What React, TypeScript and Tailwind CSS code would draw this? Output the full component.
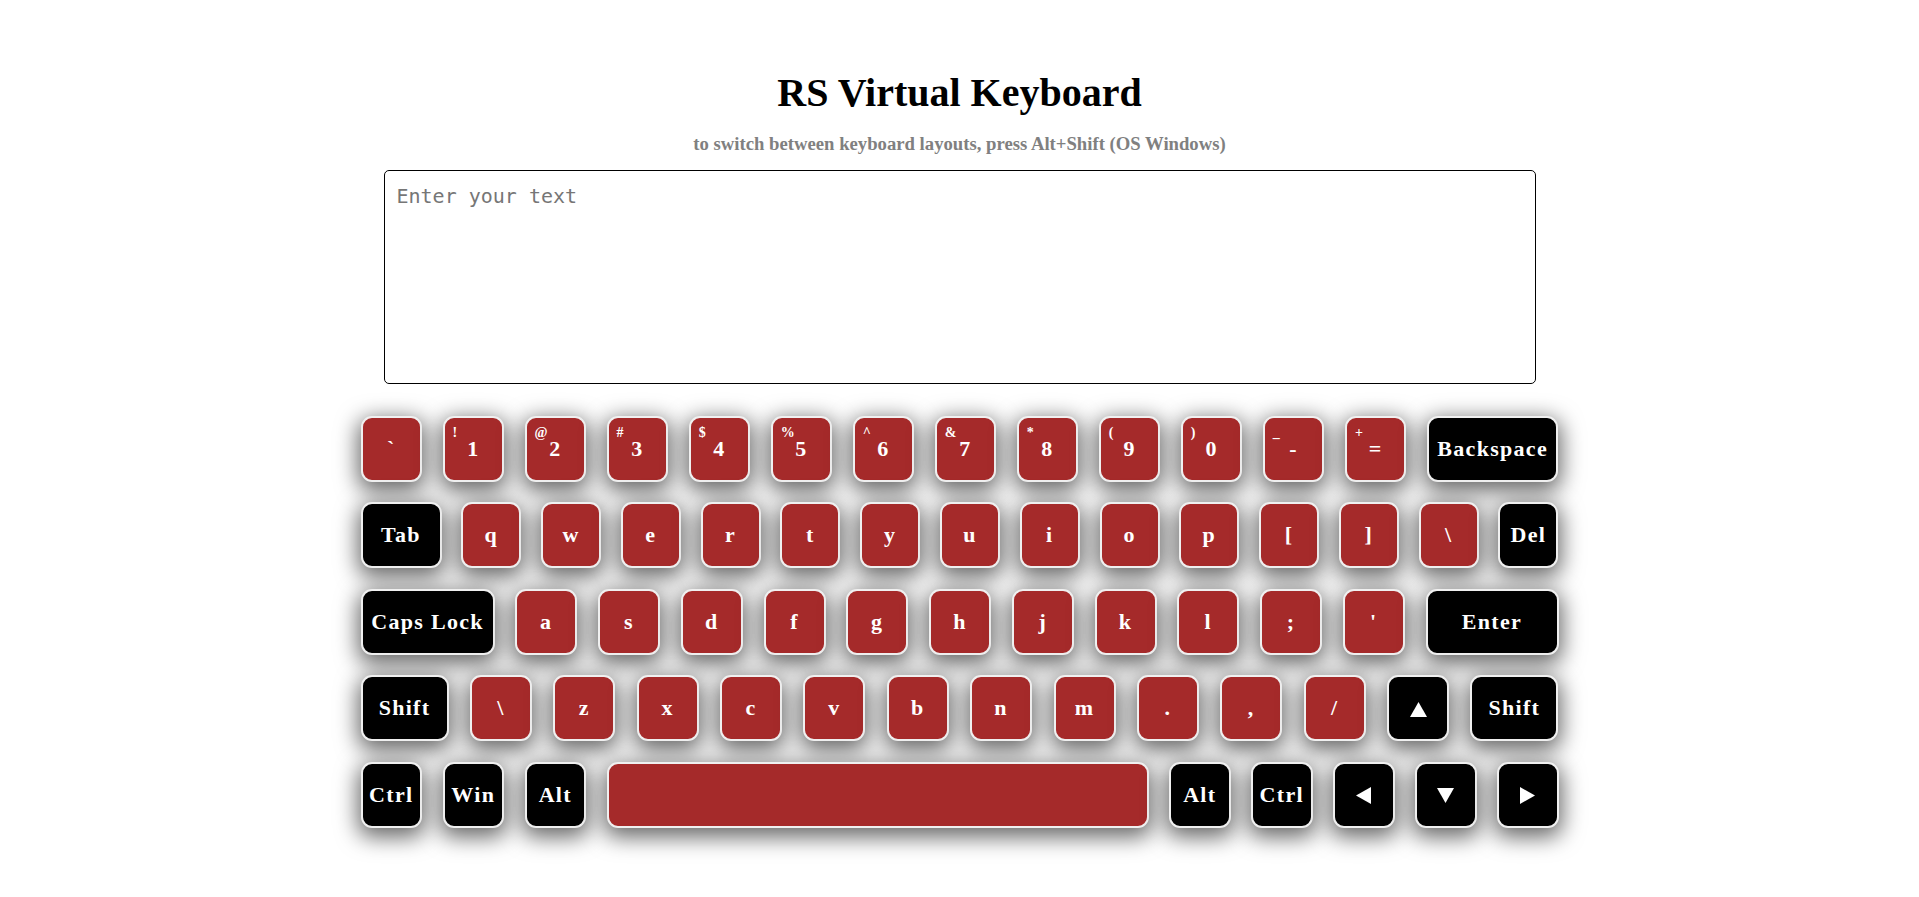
import React from "react";

type K = { l: string; s?: string; w: string; d?: boolean };

const N = "w-[61.5px]";
const Q = "w-[60px]";
const A = "w-[62px]";

const rows: K[][] = [
  [
    { l: "`", w: N },
    { l: "1", s: "!", w: N },
    { l: "2", s: "@", w: N },
    { l: "3", s: "#", w: N },
    { l: "4", s: "$", w: N },
    { l: "5", s: "%", w: N },
    { l: "6", s: "^", w: N },
    { l: "7", s: "&", w: N },
    { l: "8", s: "*", w: N },
    { l: "9", s: "(", w: N },
    { l: "0", s: ")", w: N },
    { l: "-", s: "_", w: N },
    { l: "=", s: "+", w: N },
    { l: "Backspace", w: "w-[131.5px]", d: true },
  ],
  [
    { l: "Tab", w: "w-[81px]", d: true },
    { l: "q", w: Q },
    { l: "w", w: Q },
    { l: "e", w: Q },
    { l: "r", w: Q },
    { l: "t", w: Q },
    { l: "y", w: Q },
    { l: "u", w: Q },
    { l: "i", w: Q },
    { l: "o", w: Q },
    { l: "p", w: Q },
    { l: "[", w: Q },
    { l: "]", w: Q },
    { l: "\\", w: Q },
    { l: "Del", w: Q, d: true },
  ],
  [
    { l: "Caps Lock", w: "w-[134px]", d: true },
    { l: "a", w: A },
    { l: "s", w: A },
    { l: "d", w: A },
    { l: "f", w: A },
    { l: "g", w: A },
    { l: "h", w: A },
    { l: "j", w: A },
    { l: "k", w: A },
    { l: "l", w: A },
    { l: ";", w: A },
    { l: "'", w: A },
    { l: "Enter", w: "w-[133px]", d: true },
  ],
  [
    { l: "Shift", w: "w-[88px]", d: true },
    { l: "\\", w: A },
    { l: "z", w: A },
    { l: "x", w: A },
    { l: "c", w: A },
    { l: "v", w: A },
    { l: "b", w: A },
    { l: "n", w: A },
    { l: "m", w: A },
    { l: ".", w: A },
    { l: ",", w: A },
    { l: "/", w: A },
    { l: "up", w: A, d: true },
    { l: "Shift", w: "w-[88px]", d: true },
  ],
  [
    { l: "Ctrl", w: N, d: true },
    { l: "Win", w: N, d: true },
    { l: "Alt", w: N, d: true },
    { l: "", w: "w-[542px]" },
    { l: "Alt", w: N, d: true },
    { l: "Ctrl", w: N, d: true },
    { l: "left", w: N, d: true },
    { l: "down", w: N, d: true },
    { l: "right", w: N, d: true },
  ],
];

const tri: Record<string, string> = {
  up: "M8.5 0 L17 15 L0 15 Z",
  down: "M0 0 L17 0 L8.5 15 Z",
  left: "M15 0 L15 17 L0 8.5 Z",
  right: "M0 0 L15 8.5 L0 17 Z",
};

function Key({ k }: { k: K }) {
  const t = tri[k.l];
  return (
    <div
      className={`relative flex items-center justify-center h-[66px] rounded-[11px] border-2 border-[#f0f0f0] shadow-[0_6px_22px_3px_rgba(0,0,0,0.6)] text-white font-bold ${k.w} ${
        k.d ? "bg-black" : "bg-[#a52a2a]"
      }`}
    >
      {k.s && (
        <span className="absolute left-[8px] top-[7px] text-[14px] leading-[16px]">
          {k.s}
        </span>
      )}
      {t ? (
        <svg
          width={k.l === "up" || k.l === "down" ? 17 : 15}
          height={k.l === "up" || k.l === "down" ? 15 : 17}
          viewBox={k.l === "up" || k.l === "down" ? "0 0 17 15" : "0 0 15 17"}
          className="mt-[2px]"
        >
          <path d={t} fill="white" />
        </svg>
      ) : (
        <span className="text-[22px] leading-[26px] tracking-[1.3px]">{k.l}</span>
      )}
    </div>
  );
}

export default function App() {
  return (
    <div className="min-h-screen bg-white flex flex-col items-center font-['Liberation_Serif',serif]">
      <h1 className="mt-[70px] text-[40px] leading-[46px] font-bold text-black">
        RS Virtual Keyboard
      </h1>
      <p className="mt-[17px] text-[18.7px] leading-[21px] font-bold text-[#808080]">
        to switch between keyboard layouts, press Alt+Shift (OS Windows)
      </p>
      <textarea
        className="mt-[16px] w-[1152px] h-[214px] resize-none border border-black rounded-[5px] pt-[14px] px-[12px] font-['DejaVu_Sans_Mono',monospace] text-[20px] leading-[23px] text-black placeholder:text-[#767676] outline-none"
        placeholder="Enter your text"
      />
      <div className="mt-[32px] w-[1198px] flex flex-col gap-[20.4px]">
        {rows.map((r, i) => (
          <div key={i} className="flex justify-between">
            {r.map((k, j) => (
              <Key key={j} k={k} />
            ))}
          </div>
        ))}
      </div>
    </div>
  );
}
